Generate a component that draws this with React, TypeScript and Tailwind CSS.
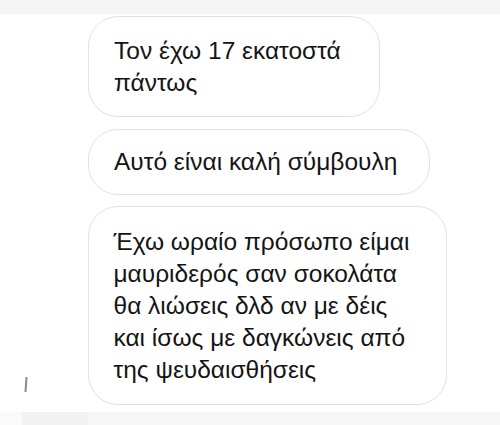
const bubble =
  "rounded-[30px] border-[1.5px] border-[#e2e2e2] bg-white px-[25px] text-[24.5px] leading-[32px] text-[#141414]"

export default function App() {
  return (
    <div
      className="flex h-[425px] w-[500px] flex-col overflow-hidden bg-white"
      style={{ fontFamily: '"Liberation Sans", Arial, sans-serif' }}
    >
      {/* top edge of the previous screen */}
      <div className="h-[14px] bg-[#f5f5f5]" />

      <div className="flex h-[398px] flex-col pt-[2px]">
        <div className="pl-[88px]">
          <div className={`${bubble} w-[292px] py-[17.5px]`}>
            Τον έχω 17 εκατοστά
            <br />
            πάντως
          </div>
        </div>

        <div className="mt-[12px] pl-[88px]">
          <div className={`${bubble} w-[342px] py-[16px]`}>Αυτό είναι καλή σύμβουλη</div>
        </div>

        <div className="mt-[11px] flex">
          <div className="ml-[25px] mb-[13px] h-[15px] w-[1.5px] rotate-[4deg] self-end bg-[#8a8a8a]" />
          <div className={`${bubble} ml-[61px] w-[359px] py-[18.5px]`}>
            Έχω ωραίο πρόσωπο είμαι
            <br />
            μαυριδερός σαν σοκολάτα
            <br />
            θα λιώσεις δλδ αν με δέις
            <br />
            και ίσως με δαγκώνεις από
            <br />
            της ψευδαισθήσεις
          </div>
        </div>
      </div>

      {/* bottom strip */}
      <div className="flex flex-1">
        <div className="w-[22px] bg-[#fafafa]" />
        <div className="w-[66px] bg-[#f2f2f2]" />
        <div className="flex-1 bg-[#f6f6f6]" />
      </div>
    </div>
  )
}
